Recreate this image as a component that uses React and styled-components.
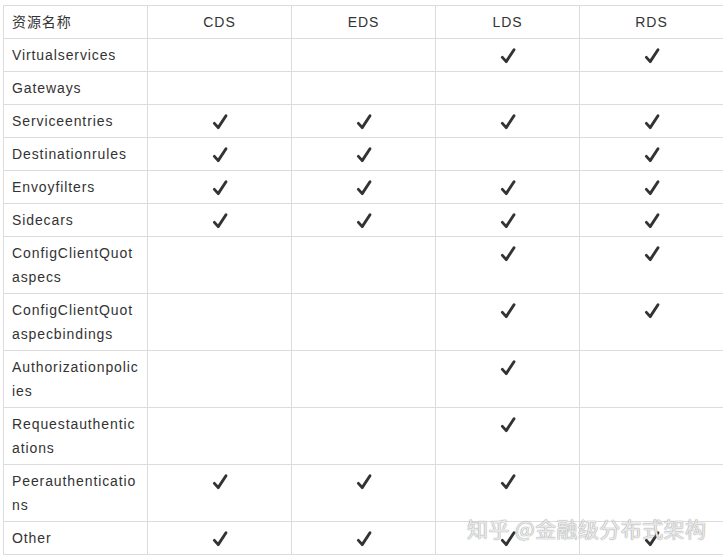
import React from "react";
import styled, { createGlobalStyle } from "styled-components";

const GlobalStyle = createGlobalStyle`
  body {
    margin: 0;
    background: #fff;
    font-family: "Liberation Sans", "Noto Sans CJK SC", sans-serif;
  }
`;

const Page = styled.div`
  position: relative;
  width: 723px;
  height: 558px;
  overflow: hidden;
  padding: 5px 0 0 3px;
  box-sizing: border-box;
`;

const Table = styled.table`
  border-collapse: collapse;
  table-layout: fixed;
  width: 721px;
  color: #333;
  font-size: 14px;
  letter-spacing: 0.9px;
`;

const Cell = styled.td`
  border: 1px solid #dcdcdc;
  padding: 4px 8px;
  line-height: 24px;
  height: 24px;
  width: 127px;
  text-align: ${(p) => (p.$center ? "center" : "left")};
  vertical-align: ${(p) => (p.$center ? "top" : "middle")};
  word-break: break-all;
  font-weight: normal;
`;

const Head = styled(Cell).attrs({ as: "th" })``;

const Tick = styled.svg`
  display: inline-block;
  width: 18px;
  height: 18px;
  margin-top: 4px;
  vertical-align: top;
`;

const Watermark = styled.div`
  position: absolute;
  left: 467px;
  top: 513px;
  font-size: 21px;
  letter-spacing: 0.4px;
  font-family: "Noto Sans CJK SC", sans-serif;
  color: rgba(255, 255, 255, 0.8);
  text-shadow: 0 0 1px #999, 0 0 1px #999;
  pointer-events: none;
  white-space: nowrap;
`;

const Check = () => (
  <Tick viewBox="0 0 18 18">
    <path
      d="M3.4 10.4 L7.2 14.6 L15 2.8"
      fill="none"
      stroke="#333"
      strokeWidth="2.9"
      strokeLinecap="round"
      strokeLinejoin="round"
    />
  </Tick>
);

const cols = ["CDS", "EDS", "LDS", "RDS"];

const rows = [
  ["Virtualservices", "LDS RDS"],
  ["Gateways", ""],
  ["Serviceentries", "CDS EDS LDS RDS"],
  ["Destinationrules", "CDS EDS RDS"],
  ["Envoyfilters", "CDS EDS LDS RDS"],
  ["Sidecars", "CDS EDS LDS RDS"],
  ["ConfigClientQuotaspecs", "LDS RDS"],
  ["ConfigClientQuotaspecbindings", "LDS RDS"],
  ["Authorizationpolicies", "LDS"],
  ["Requestauthentications", "LDS"],
  ["Peerauthentications", "CDS EDS LDS"],
  ["Other", "CDS EDS LDS RDS"],
];

export default function App() {
  return (
    <>
      <GlobalStyle />
      <Page>
        <Table>
          <thead>
            <tr>
              <Head>资源名称</Head>
              {cols.map((c) => (
                <Head key={c} $center style={{ verticalAlign: "middle" }}>
                  {c}
                </Head>
              ))}
            </tr>
          </thead>
          <tbody>
            {rows.map(([name, has]) => (
              <tr key={name}>
                <Cell>{name}</Cell>
                {cols.map((c) => (
                  <Cell key={c} $center>
                    {has.split(" ").includes(c) ? <Check /> : null}
                  </Cell>
                ))}
              </tr>
            ))}
          </tbody>
        </Table>
        <Watermark>知乎 @金融级分布式架构</Watermark>
      </Page>
    </>
  );
}
